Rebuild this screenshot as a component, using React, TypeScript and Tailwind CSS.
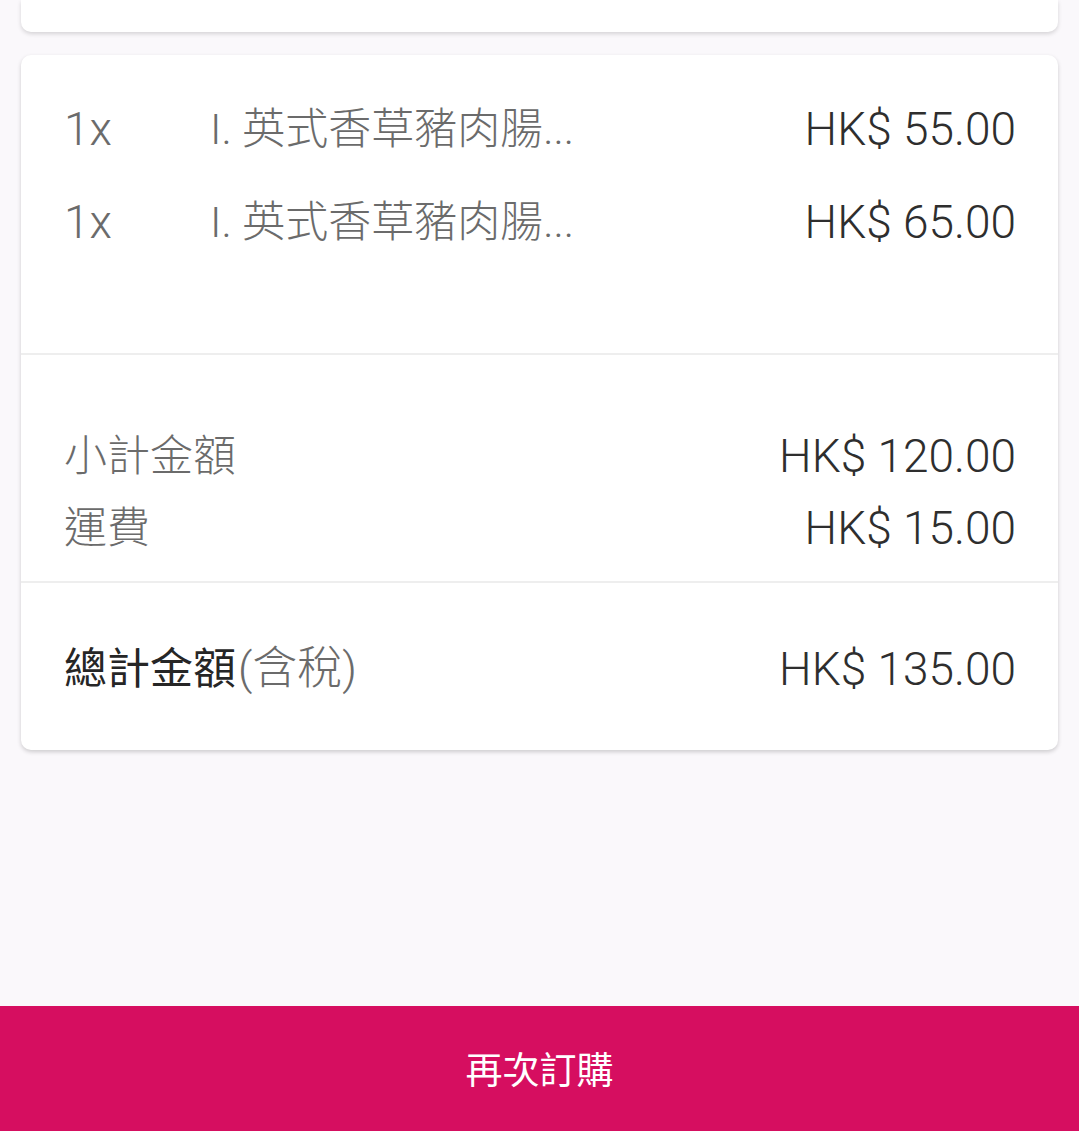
import React from "react";

const latin = { fontFamily: "Roboto, 'Noto Sans CJK TC', sans-serif" };

function ItemRow({ qty, name, price }: { qty: string; name: string; price: string }) {
  return (
    <div className="flex h-[93px] items-center">
      <div className="w-[146px] text-[46px] font-light text-[#6b6b6b]">{qty}</div>
      <div className="whitespace-nowrap text-[43px] font-light text-[#6b6b6b]">{name}</div>
      <div className="ml-auto text-[46px] font-light text-[#2e2e2e]">{price}</div>
    </div>
  );
}

export default function App() {
  return (
    <div className="flex h-[1131px] flex-col bg-[#faf8fb]" style={latin}>
      <div className="mx-[21px] h-[32px] rounded-b-[10px] bg-white shadow-[0_2px_4px_rgba(0,0,0,0.15)]" />
      <div className="mx-[21px] mt-[23px] rounded-[10px] bg-white shadow-[0_2px_4px_rgba(0,0,0,0.18)]">
        <div className="pl-[43px] pr-[42px] pt-[28px] pb-[84px]">
          <ItemRow qty="1x" name="I. 英式香草豬肉腸..." price="HK$ 55.00" />
          <ItemRow qty="1x" name="I. 英式香草豬肉腸..." price="HK$ 65.00" />
        </div>
        <div className="h-[2px] bg-[#eeeeee]" />
        <div className="pl-[43px] pr-[42px] pt-[65px] pb-[17px]">
          <div className="flex h-[72px] items-center">
            <div className="text-[43px] font-light text-[#6b6b6b]">小計金額</div>
            <div className="ml-auto text-[46px] font-light text-[#2e2e2e]">HK$ 120.00</div>
          </div>
          <div className="flex h-[72px] items-center">
            <div className="text-[43px] font-light text-[#6b6b6b]">運費</div>
            <div className="ml-auto text-[46px] font-light text-[#2e2e2e]">HK$ 15.00</div>
          </div>
        </div>
        <div className="h-[2px] bg-[#eeeeee]" />
        <div className="pl-[43px] pr-[42px] pt-[56px] pb-[51px]">
          <div className="flex h-[60px] items-center">
            <div className="text-[43px] font-normal text-[#262626]">
              總計金額<span className="ml-[2px] text-[45px] font-light text-[#6b6b6b]">(含稅)</span>
            </div>
            <div className="ml-auto text-[46px] font-light text-[#2e2e2e]">HK$ 135.00</div>
          </div>
        </div>
      </div>
      <div className="flex-1" />
      <button className="flex h-[125px] w-full items-center justify-center bg-[#d60e60] pt-[6px] text-[37px] font-normal text-white">
        再次訂購
      </button>
    </div>
  );
}
